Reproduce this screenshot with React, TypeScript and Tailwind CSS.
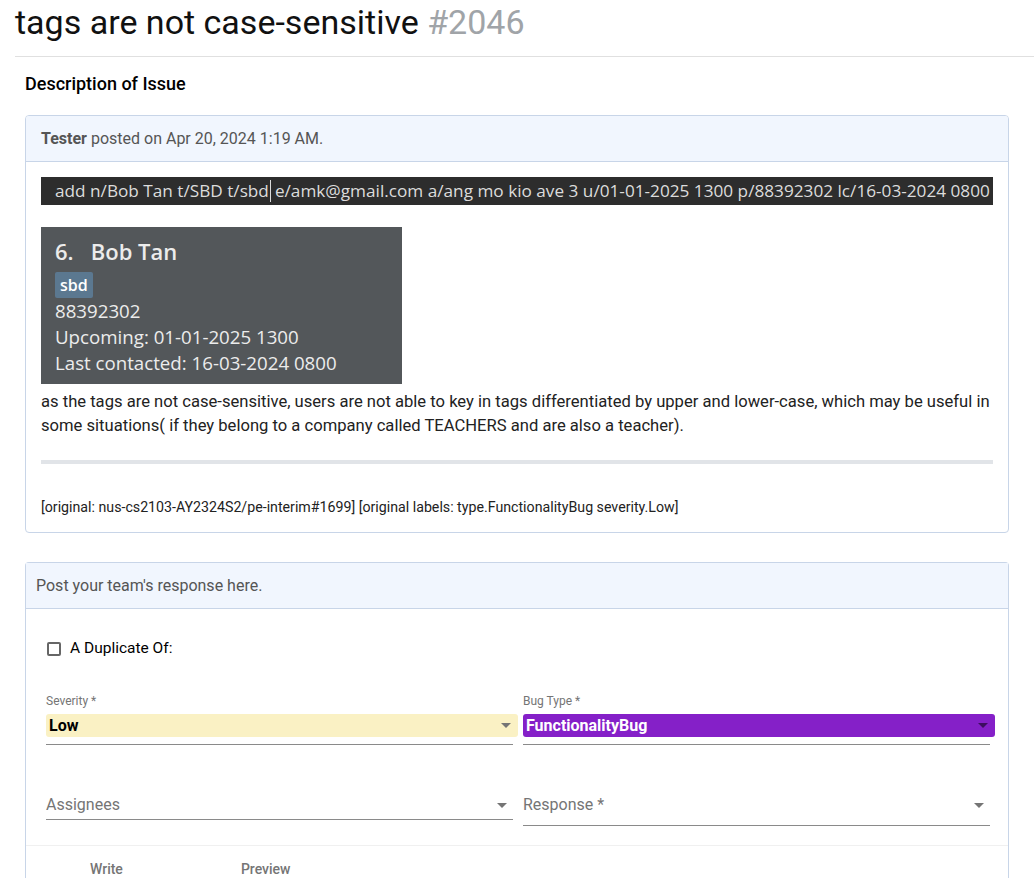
const ROBOTO = { fontFamily: "Roboto, 'Liberation Sans', sans-serif" };

function Caret({ className }: { className?: string }) {
  return (
    <svg width="10" height="5" viewBox="0 0 10 5" className={className}>
      <path d="M0 0 L10 0 L5 5 Z" fill="currentColor" />
    </svg>
  );
}

function SelectField({
  label,
  value,
  tone,
}: {
  label: string;
  value: string;
  tone: "yellow" | "purple";
}) {
  const yellow = tone === "yellow";
  return (
    <div className="flex-1">
      <div className="text-[12px] leading-[14px] text-[#757575] mb-[6px]">{label}</div>
      <div
        className={`flex items-center h-[23px] rounded-[3px] pl-[3px] pr-[7px] ${
          yellow ? "bg-[#faf1c4] text-black" : "bg-[#8520c8] text-white"
        }`}
      >
        <span className="flex-1 text-[16px] font-bold leading-none">{value}</span>
        <Caret className={yellow ? "text-[#757575]" : "text-[#3d0d60]"} />
      </div>
      <div className="mt-[7px] h-px bg-[#8a8a8a] mr-[5px]" />
    </div>
  );
}

function PlaceholderField({ label, line }: { label: string; line: string }) {
  return (
    <div className="flex-1">
      <div className="flex items-center h-[24px] pr-[11px]">
        <span className="flex-1 text-[16px] text-[#757575]">{label}</span>
        <Caret className="text-[#757575]" />
      </div>
      <div className={`h-px bg-[#8a8a8a] mr-[5px] ${line}`} />
    </div>
  );
}

export default function App() {
  return (
    <div className="bg-white h-[878px] overflow-hidden text-black" style={ROBOTO}>
      <div className="pl-[15px]">
        <h1 className="text-[34px] leading-[40px] pt-[2px] text-[#111]">
          tags are not case-sensitive <span className="text-[#a0a4a8]">#2046</span>
        </h1>
        <div className="mt-[14px] h-px bg-[#e0e0e0]" />
      </div>

      <div className="pl-[25px] pr-[25px]">
        <h2 className="text-[18px] font-medium leading-[22px] mt-[16px] mb-[20px]">Description of Issue</h2>

        {/* Issue card */}
        <div className="border border-[#c8d5e8] rounded-[4px] overflow-hidden">
          <div className="bg-[#f1f6fe] border-b border-[#c8d5e8] h-[46px] flex items-center px-[15px] text-[16px] text-[#555]">
            <span className="font-bold">Tester</span>&nbsp;posted on Apr 20, 2024 1:19 AM.
          </div>
          <div className="px-[15px] pt-[15px] pb-[16px]">
            <div
              className="bg-[#2d2d2d] h-[28px] flex items-center pl-[14px] text-[17.2px] text-[#dcdcdc] whitespace-nowrap overflow-hidden"
              style={{ fontFamily: "'Open Sans', sans-serif" }}
            >
              add n/Bob Tan t/SBD t/sbd<span className="inline-block w-px h-[22px] bg-[#dcdcdc] ml-[1px] mr-[4px]" />
              e/amk@gmail.com a/ang mo kio ave 3 u/01-01-2025 1300 p/88392302 lc/16-03-2024 0800
            </div>

            <div
              className="mt-[22px] w-[361px] bg-[#53575a] pl-[14px] pt-[9px] pb-[8px] text-[#ececec]"
              style={{ fontFamily: "'Open Sans', sans-serif" }}
            >
              <div className="text-[22px] font-semibold leading-[30px]">
                6.&nbsp;&nbsp;&nbsp;Bob Tan
              </div>
              <div className="mt-[6px] inline-block bg-[#5b7890] rounded-[2px] px-[5px] text-[16px] font-semibold leading-[26px] text-white">
                sbd
              </div>
              <div className="text-[18.7px] leading-[26px]">88392302</div>
              <div className="text-[18.7px] leading-[26px]">Upcoming: 01-01-2025 1300</div>
              <div className="text-[18.7px] leading-[26px]">Last contacted: 16-03-2024 0800</div>
            </div>

            <p className="mt-[6px] text-[16.6px] leading-[24px] text-[#222]">
              as the tags are not case-sensitive, users are not able to key in tags differentiated by upper and
              lower-case, which may be useful in some situations( if they belong to a company called TEACHERS and
              are also a teacher).
            </p>

            <div className="mt-[22px] h-[4px] bg-[#e1e4e8]" />

            <p className="mt-[34px] text-[14.2px] leading-[18px] text-[#222]">
              [original: nus-cs2103-AY2324S2/pe-interim#1699] [original labels: type.FunctionalityBug severity.Low]
            </p>
          </div>
        </div>

        {/* Response card */}
        <div className="mt-[29px] border border-[#c8d5e8] rounded-t-[4px] border-b-0 h-[400px]">
          <div className="bg-[#f1f6fe] border-b border-[#c8d5e8] h-[46px] flex items-center px-[10px] text-[16px] text-[#555]">
            Post your team's response here.
          </div>

          <div className="pl-[20px] pr-[13px]">
            <label className="mt-[28px] flex items-center gap-[9px] text-[15.5px]">
              <span className="w-[14px] h-[14px] border-2 border-[#666] rounded-[2px] ml-[1px]" />
              A Duplicate Of:
            </label>

            <div className="mt-[34px] flex gap-[5px]">
              <SelectField label="Severity *" value="Low" tone="yellow" />
              <SelectField label="Bug Type *" value="FunctionalityBug" tone="purple" />
            </div>

            <div className="mt-[48px] flex gap-[5px] items-start">
              <PlaceholderField label="Assignees" line="mt-[2px]" />
              <PlaceholderField label="Response *" line="mt-[8px]" />
            </div>
          </div>

          <div className="mt-[19px] h-px bg-[#f0f0f0]" />

          <div className="flex text-[14px] font-medium text-[#757575] pt-[13px]">
            <span className="ml-[64px]">Write</span>
            <span className="ml-[118px]">Preview</span>
          </div>
        </div>
      </div>
    </div>
  );
}
